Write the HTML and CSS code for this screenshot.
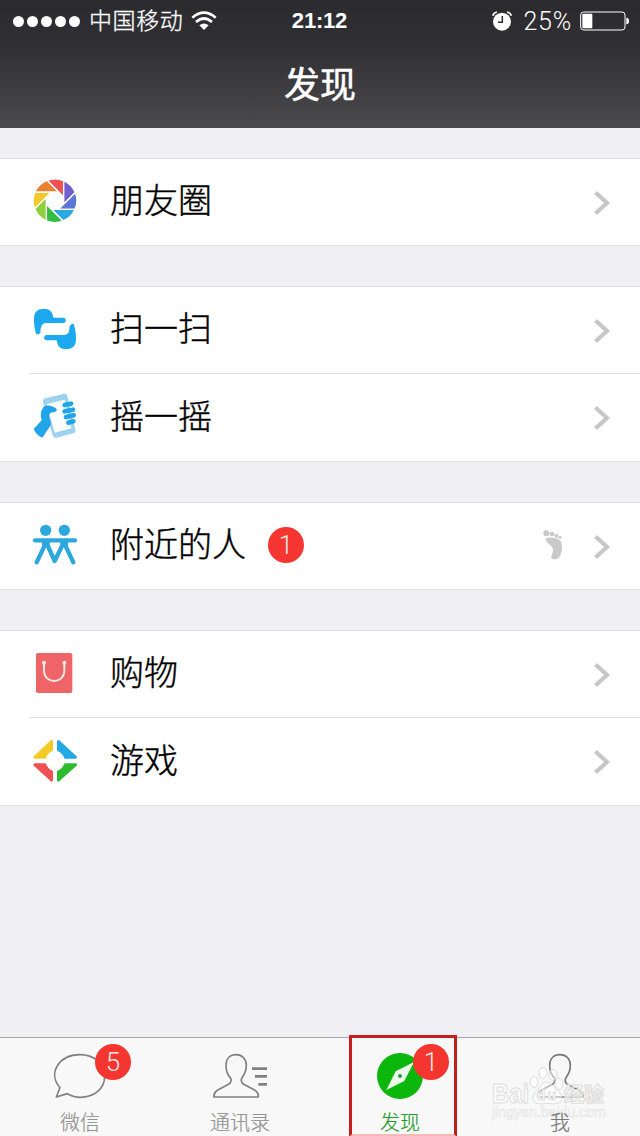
FILE: index.html
```html
<!DOCTYPE html>
<html lang="zh-CN">
<head>
<meta charset="utf-8">
<title>发现</title>
<link rel="stylesheet" href="styles.css">
</head>
<body>
<svg class="defs" width="0" height="0">
  <symbol id="chevron" viewBox="0 0 18 28"><path d="M2.500 3.500 L14 14 L2.500 24.500" fill="none" stroke="#c7c7c7" stroke-width="4.200"/></symbol>
  <symbol id="blade" viewBox="-72 -72 144 144" overflow="visible"><path d="M-23.300 -58.700 A63 63 0 0 1 25 -58 V-10.400 Z"/></symbol>
</svg>
<div class="screen">
  <header class="header">
    <div class="status">
      <div class="status-side">
        <span class="signal"><i></i><i></i><i></i><i></i><i></i></span>
        <span class="carrier">中国移动</span>
        <svg class="wifi" width="26" height="20" viewBox="0 0 78 60"><path d="M4 20 Q39 -10 74 20 M15 33 Q39 12 63 33" fill="none" stroke="#fff" stroke-width="8"/><path d="M25 43 Q39 32 53 43 L39 57 Z" fill="#fff"/></svg>
      </div>
      <time class="clock">21:12</time>
      <div class="status-side status-right">
        <svg width="20" height="20" viewBox="0 0 60 60"><circle cx="30" cy="32" r="27" fill="#fff"/><path d="M2 14 Q5 5 15 3 M58 14 Q55 5 45 3" stroke="#fff" stroke-width="5" fill="none"/><path d="M31 15 V34 H18" stroke="#2d2d31" stroke-width="4.500" fill="none"/></svg>
        <span class="percent">25%</span>
        <svg width="49" height="20" viewBox="0 0 147 60"><rect x="2" y="3" width="133" height="54" rx="9" fill="none" stroke="#fff" stroke-width="3"/><rect x="7" y="8" width="30" height="44" rx="3" fill="#fff"/><path d="M139 20 Q147 20 147 30 Q147 40 139 40Z" fill="#fff"/></svg>
      </div>
    </div>
    <h1 class="title">发现</h1>
  </header>

  <main class="content">
    <section class="group">
      <div class="row">
        <svg class="icon" viewBox="-72 -71 144 144">
          <g stroke="#fff" stroke-width="4" transform="scale(1.040)">
            <path fill="#ee5253" d="M-23.300 -58.700 A63 63 0 0 1 25 -58 V-10.400 Z"/>
            <path fill="#7160cf" transform="rotate(45)" d="M-23.300 -58.700 A63 63 0 0 1 25 -58 V-10.400 Z"/>
            <path fill="#5a78d6" transform="rotate(90)" d="M-23.300 -58.700 A63 63 0 0 1 25 -58 V-10.400 Z"/>
            <path fill="#2ba8e4" transform="rotate(135)" d="M-23.300 -58.700 A63 63 0 0 1 25 -58 V-10.400 Z"/>
            <path fill="#35bd43" transform="rotate(180)" d="M-23.300 -58.700 A63 63 0 0 1 25 -58 V-10.400 Z"/>
            <path fill="#8ecf3c" transform="rotate(225)" d="M-23.300 -58.700 A63 63 0 0 1 25 -58 V-10.400 Z"/>
            <path fill="#f4c72d" transform="rotate(270)" d="M-23.300 -58.700 A63 63 0 0 1 25 -58 V-10.400 Z"/>
            <path fill="#ea8130" transform="rotate(315)" d="M-23.300 -58.700 A63 63 0 0 1 25 -58 V-10.400 Z"/>
          </g>
        </svg>
        <span class="label">朋友圈</span>
        <svg class="chevron"><use href="#chevron"/></svg>
      </div>
    </section>

    <section class="group">
      <div class="row">
        <svg class="icon" viewBox="18 15 144 144" fill="#1ca9ef">
          <path d="M34 103 C31 92 27 82 27 56 C27 37 37 27 52 27 H62 C76 27 83 38 85 53 H115 C125 53 125 69 115 69 H66 C51 69 47 76 46 100 Q40 104 34 103 Z"/>
          <path d="M146 71 C149 82 153 92 153 118 C153 137 143 147 128 147 H118 C104 147 97 136 95 121 H65 C55 121 55 105 65 105 H114 C129 105 133 98 134 78 Q140 70 146 71 Z"/>
        </svg>
        <span class="label">扫一扫</span>
        <svg class="chevron"><use href="#chevron"/></svg>
      </div>
      <div class="row">
        <svg class="icon" viewBox="18 24 144 144">
          <path d="M54 52 Q52 43 61 40 L115 27 Q124 25 127 33 L151 134 Q153 143 144 145 L94 158 Q85 159 83 150 Z" fill="#9dd2ee"/>
          <path d="M65 57 L119 44 L139 130 L89 143 Z" fill="#fbfeff"/>
          <path d="M26 132 L50 106 C46 91 47 80 52 72 C58 61 68 60 80 64 C89 67 96 70 95 76 C93 84 76 80 73 88 C70 99 80 109 77 121 L52 158 Q34 151 26 132Z" fill="#20a5e8"/>
          <path d="M119 60 L138 56 M119 79 L144 74 M123 96 L146 91 M130 113 L145 109" stroke="#20a5e8" stroke-width="14" stroke-linecap="round"/>
        </svg>
        <span class="label">摇一摇</span>
        <svg class="chevron"><use href="#chevron"/></svg>
      </div>
    </section>

    <section class="group">
      <div class="row">
        <svg class="icon" viewBox="33 33 144 144">
          <g fill="none" stroke="#2ca8df" stroke-width="13" stroke-linecap="round" stroke-linejoin="round"><path d="M45 91 H165"/><path d="M77 100 L50 157 M79 98 L104 153 L131 98 M133 100 L160 157"/></g>
          <circle cx="77" cy="61" r="17" fill="#2ca8df"/><circle cx="133" cy="61" r="17" fill="#2ca8df"/>
          <path d="M66 90 H92 L86 111 L66 111Z M118 90 H144 L144 111 L124 111Z" fill="#2ca8df"/>
        </svg>
        <span class="label">附近的人</span>
        <span class="badge">1</span>
        <svg class="foot" width="20" height="32" viewBox="0 0 60 96" fill="#c9c9c9"><path d="M8 28 C23 23 43 27 52 35 C60 45 57 70 51 82 C46 92 30 94 25 87 C22 82 33 69 30 60 C27 49 8 42 8 28Z"/><circle cx="10" cy="13" r="9"/><circle cx="27" cy="15" r="7"/><circle cx="40" cy="20" r="6"/><circle cx="51" cy="25" r="5"/></svg>
        <svg class="chevron"><use href="#chevron"/></svg>
      </div>
    </section>

    <section class="group">
      <div class="row">
        <svg class="icon" viewBox="33 27 144 144">
          <rect x="48" y="39" width="109" height="120" rx="6" fill="#ee6467"/>
          <path d="M72 70 V91 C72 134 133 134 133 91 V70" fill="none" stroke="#ffe8e8" stroke-width="6"/><circle cx="72" cy="68" r="6" fill="#ffe8e8"/><circle cx="133" cy="68" r="6" fill="#ffe8e8"/>
        </svg>
        <span class="label">购物</span>
        <svg class="chevron"><use href="#chevron"/></svg>
      </div>
      <div class="row">
        <svg class="icon" viewBox="33 291 144 144">
          <g stroke-width="8" stroke-linejoin="round">
            <path d="M95 304 V330 Q80 336 75 352 H44Z" fill="#f1cb27" stroke="#f1cb27"/>
            <path d="M115 304 V330 Q130 336 136 352 H167Z" fill="#24a9e5" stroke="#24a9e5"/>
            <path d="M44 374 H75 Q80 389 95 395 V421Z" fill="#ee5254" stroke="#ee5254"/>
            <path d="M167 374 H136 Q130 389 115 395 V421Z" fill="#2dbb30" stroke="#2dbb30"/>
          </g>
        </svg>
        <span class="label">游戏</span>
        <svg class="chevron"><use href="#chevron"/></svg>
      </div>
    </section>
  </main>

  <nav class="tabs">
    <div class="tab">
      <svg class="tab-icon" viewBox="0 24 480 192"><path d="M169 201 L180 173 C142 130 177 74 240 74 C281 74 314 100 314 139 C314 178 281 202 241 202 C225 202 213 197 202 191 Z" fill="#f9f9f9" stroke="#808080" stroke-width="5" stroke-linejoin="round"/></svg>
      <span class="tab-label">微信</span>
      <span class="badge tab-badge chat-badge">5</span>
    </div>
    <div class="tab">
      <svg class="tab-icon" viewBox="480 24 480 192"><path d="M642 201 H775 Q777 189 765 181 L730 162 Q720 154 726 143 C737 129 739 119 739 106 C739 86 726 74 708 74 C690 74 678 86 678 106 C678 120 680 132 691 143 Q697 154 687 162 L652 181 Q640 189 642 201Z" fill="none" stroke="#808080" stroke-width="5" stroke-linejoin="round"/><path d="M756 116 H801 M765 139 H801 M775 163 H801" stroke="#808080" stroke-width="8"/></svg>
      <span class="tab-label">通讯录</span>
    </div>
    <div class="tab active">
      <svg class="tab-icon" viewBox="0 24 480 192"><circle cx="240" cy="138" r="69" fill="#0cb70c"/><path d="M282 96 L253 153 L199 180 L227 124Z" fill="#edfbe9"/><circle cx="240" cy="138" r="6" fill="#36924b"/></svg>
      <span class="tab-label">发现</span>
      <span class="badge tab-badge discover-badge">1</span>
    </div>
    <div class="tab">
      <svg class="tab-icon" viewBox="480 24 480 192"><path d="M653 201 H788 Q790 189 777 181 L741 162 Q732 154 738 143 C749 129 751 119 751 106 C751 86 738 74 720 74 C701 74 689 86 689 106 C689 120 691 132 703 143 Q708 154 699 162 L664 181 Q651 189 653 201Z" fill="none" stroke="#777" stroke-width="5" stroke-linejoin="round"/></svg>
      <span class="tab-label me-label">我</span>
    </div>
  </nav>
  <div class="highlight"></div>
  <svg class="watermark" width="124" height="60" viewBox="0 0 124 60">
    <g class="mark-text"><text x="4" y="37" font-size="27" font-weight="700" textLength="37" lengthAdjust="spacingAndGlyphs">Bai</text><text x="76" y="36" font-size="20" font-weight="700" textLength="40">经验</text></g>
    <g class="paw"><ellipse cx="46" cy="16" rx="4" ry="5.500"/><ellipse cx="55" cy="7" rx="4" ry="5.500"/><ellipse cx="65" cy="9" rx="4" ry="5.500"/><ellipse cx="71" cy="18" rx="4" ry="5.500"/><path d="M58 16 C64 16 66 22 72 27 C78 35 70 40 59 37 C48 40 41 35 47 27 C52 23 53 16 58 16Z"/></g>
    <text class="mark-du" x="49" y="34" font-size="14" font-weight="700" textLength="19">du</text>
    <text class="mark-url" x="4" y="51" font-size="14" textLength="114" lengthAdjust="spacingAndGlyphs">jingyan.baidu.com</text>
  </svg>
</div>
</body>
</html>
```
FILE: styles.css
```css
* { box-sizing: border-box; }
body { margin: 0; font-family: "Liberation Sans", "Noto Sans CJK SC", sans-serif; }
.defs { position: absolute; }
.screen { position: relative; display: flex; flex-direction: column; width: 640px; height: 1136px; overflow: hidden; background: #efeff4; }
.header { height: 128px; flex: none; color: #fff; background: linear-gradient(#2b2a2f 0, #303034 35%, #4a4a4d 100%); }
.status { display: grid; grid-template-columns: 1fr 80px 1fr; align-items: center; height: 40px; padding: 0 11px 0 13px; }
.status-side { display: flex; align-items: center; height: 40px; }
.status-right { justify-content: flex-end; }
.signal { display: flex; gap: 3px; }
.signal i { width: 11px; height: 11px; border-radius: 50%; background: #fff; }
.carrier { margin-left: 9px; font-size: 23px; font-weight: 300; line-height: 42px; letter-spacing: .6px; -webkit-text-stroke: .3px; }
.wifi { margin-left: 8px; }
.clock { margin-left: -3px; text-align: center; font-size: 22px; font-weight: 700; line-height: 42px; letter-spacing: -.2px; }
.percent { margin: 0 8px 0 11px; font-family: Roboto, "Liberation Sans", sans-serif; font-weight: 300; font-size: 25px; line-height: 41px; letter-spacing: .8px; }
.title { margin: 20px 0 0; text-align: center; font-size: 36px; font-weight: 400; line-height: 52px; -webkit-text-stroke: .5px; }
.content { display: flex; flex-direction: column; gap: 40px; padding-top: 30px; flex: 1; }
.group { background: #fff; border-top: 1px solid #dedee1; border-bottom: 1px solid #dedee1; }
.row { position: relative; display: flex; align-items: center; height: 86px; padding: 0 29px 0 31px; }
.row + .row { height: 88px; }
.row + .row::before { content: ""; position: absolute; top: 0; left: 30px; right: 0; height: 1px; background: #dedee1; }
.icon { width: 48px; height: 48px; margin-top: -2px; }
.row + .row .icon { margin-top: 0; }
.label { margin-left: 31px; margin-top: -3px; color: #000; font-size: 34px; font-weight: 300; line-height: 50px; -webkit-text-stroke: .4px; }
.row + .row .label { margin-top: -1px; }
.chevron { width: 18px; height: 28px; margin-left: auto; margin-top: 1px; }
.badge { width: 36px; height: 36px; border-radius: 50%; background: #f43530; color: #ffe9e7; font-family: Roboto, "Liberation Sans", sans-serif; font-weight: 300; font-size: 26px; line-height: 37px; text-align: center; }
.label + .badge { margin-left: 22px; margin-top: -2px; }
.foot { margin-left: auto; margin-right: 1px; margin-top: -2px; }
.foot + .chevron { margin-left: 29px; }
.tabs { display: grid; grid-template-columns: repeat(4, 1fr); height: 99px; background: #f8f8f8; border-top: 1px solid #a5a5aa; }
.tab { position: relative; display: flex; flex-direction: column; align-items: center; color: #929292; }
.tab-icon { width: 160px; height: 64px; flex: none; }
.tab-label { margin-top: 5px; font-size: 20px; font-weight: 300; line-height: 32px; -webkit-text-stroke: .2px; }
.me-label { position: relative; z-index: 2; color: #777; }
.active { color: #239b29; }
.tab-badge { position: absolute; top: 6px; }
.chat-badge { left: 95px; }
.discover-badge { left: 93px; }
.highlight { position: absolute; left: 349px; top: 1035px; width: 108px; height: 102px; border: 3px solid #c51e1d; border-bottom: 3px solid #f6b9b9; }
.watermark { position: absolute; z-index: 1; left: 488px; top: 1066px; font-family: "Liberation Sans", "Noto Sans CJK SC", sans-serif; }
.mark-text { fill: #fff; fill-opacity: .7; stroke: #dcdcdc; stroke-width: 1; }
.paw { fill: #fff; fill-opacity: .5; stroke: #dcdcdc; stroke-width: 1; }
.mark-du { fill: #fff; stroke: #dcdcdc; stroke-width: .8; }
.mark-url { fill: #fff; fill-opacity: .7; stroke: #e4e4e4; stroke-width: .6; }
```
